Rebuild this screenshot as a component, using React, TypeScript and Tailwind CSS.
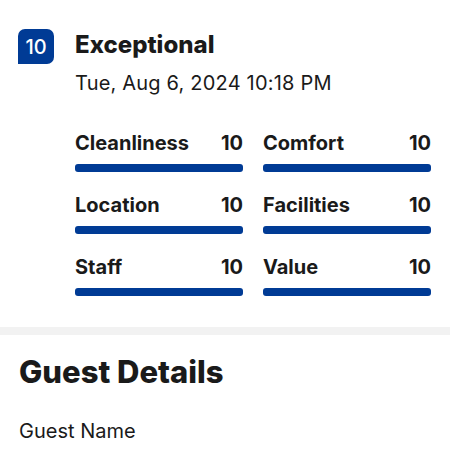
import React from 'react';

const ratings = [
  { label: 'Cleanliness', score: 10 },
  { label: 'Comfort', score: 10 },
  { label: 'Location', score: 10 },
  { label: 'Facilities', score: 10 },
  { label: 'Staff', score: 10 },
  { label: 'Value', score: 10 },
];

export default function App() {
  return (
    <div className="w-[450px] h-[450px] overflow-hidden bg-white text-[#1a1a1a]" style={{ fontFamily: 'Inter, "Noto Sans", sans-serif' }}>
      <div className="flex gap-[21px] pl-[18px] pr-[19px] pt-[29px] pb-[31px]">
        <div className="w-[36px] h-[35px] shrink-0 rounded-t-[7px] rounded-br-[7px] bg-[#003b95] text-white flex items-center justify-center text-[20px] font-medium">
          10
        </div>
        <div className="flex-1">
          <h2 className="text-[24px] font-extrabold leading-[30px] mt-[1px]">Exceptional</h2>
          <p className="text-[20px] leading-[26px] mt-[10px] tracking-[0.2px]">Tue, Aug 6, 2024 10:18 PM</p>
          <div className="grid grid-cols-2 gap-x-[20px] gap-y-[17px] mt-[31px]">
            {ratings.map((r) => (
              <div key={r.label}>
                <div className="flex justify-between items-baseline text-[20px] font-bold leading-[26px] pt-[3px]">
                  <span>{r.label}</span>
                  <span>{r.score}</span>
                </div>
                <div className="h-[8px] mt-[8px] rounded-[3px] bg-[#003b95]" />
              </div>
            ))}
          </div>
        </div>
      </div>
      <div className="h-[8px] bg-[#f2f2f2]" />
      <div className="px-[19px] pt-[18px]">
        <h2 className="text-[31px] font-extrabold leading-[38px]">Guest Details</h2>
        <p className="text-[20px] leading-[26px] mt-[27px]">Guest Name</p>
      </div>
    </div>
  );
}
